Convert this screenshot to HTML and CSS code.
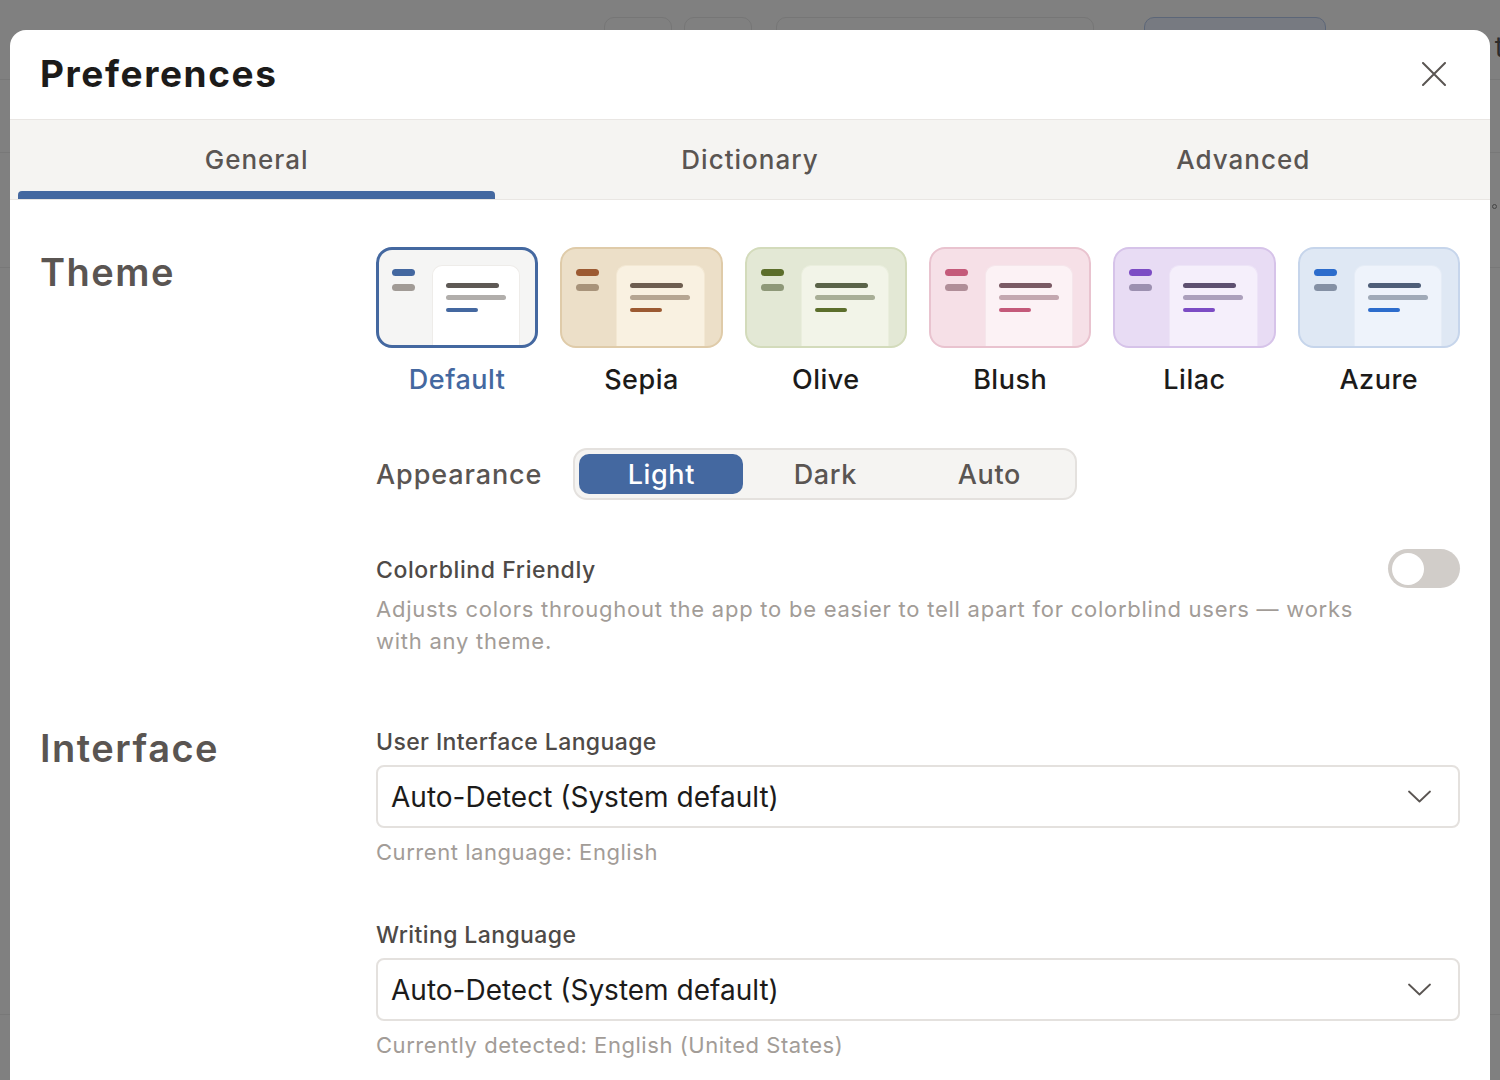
FILE: index.html
```html
<!DOCTYPE html>
<html lang="en">
<head>
    <meta charset="UTF-8">
    <meta name="viewport" content="width=device-width, initial-scale=1.0">
    <title>Preferences</title>
    <link rel="stylesheet" href="styles.css">
</head>
<body>
    <!-- app behind the dialog, dimmed -->
    <div class="backdrop">
        <div class="bg-top">
            <div class="bg-tools">
                <span class="bg-btn small"></span>
                <span class="bg-btn small"></span>
                <span class="bg-btn wide"></span>
                <span class="bg-btn primary"></span>
            </div>
            <span class="bg-text">t</span>
        </div>
        <div class="bg-row r1"></div>
        <div class="bg-row r2"><span class="bg-dot"></span></div>
        <div class="bg-row r3"></div>
    </div>

    <div class="modal">
        <header class="modal-head">
            <h1>Preferences</h1>
            <button class="close-btn" aria-label="Close">
                <svg width="24" height="24" viewBox="0 0 24 24" fill="none" stroke="#5a5552" stroke-width="2" stroke-linecap="round">
                    <path d="M1 1L23 23M23 1L1 23"/>
                </svg>
            </button>
        </header>

        <nav class="tabs">
            <div class="tab active">General</div>
            <div class="tab">Dictionary</div>
            <div class="tab">Advanced</div>
        </nav>

        <div class="modal-body">
            <section class="section">
                <h2 class="section-title">Theme</h2>
                <div class="section-content">
                    <div class="themes">
                        <div class="theme t-default selected">
                            <div class="theme-card">
                                <div class="pills"><span class="pill accent"></span><span class="pill muted"></span></div>
                                <div class="panel"><span class="ln ln1"></span><span class="ln ln2"></span><span class="ln ln3"></span></div>
                            </div>
                            <span class="theme-name">Default</span>
                        </div>
                        <div class="theme t-sepia">
                            <div class="theme-card">
                                <div class="pills"><span class="pill accent"></span><span class="pill muted"></span></div>
                                <div class="panel"><span class="ln ln1"></span><span class="ln ln2"></span><span class="ln ln3"></span></div>
                            </div>
                            <span class="theme-name">Sepia</span>
                        </div>
                        <div class="theme t-olive">
                            <div class="theme-card">
                                <div class="pills"><span class="pill accent"></span><span class="pill muted"></span></div>
                                <div class="panel"><span class="ln ln1"></span><span class="ln ln2"></span><span class="ln ln3"></span></div>
                            </div>
                            <span class="theme-name">Olive</span>
                        </div>
                        <div class="theme t-blush">
                            <div class="theme-card">
                                <div class="pills"><span class="pill accent"></span><span class="pill muted"></span></div>
                                <div class="panel"><span class="ln ln1"></span><span class="ln ln2"></span><span class="ln ln3"></span></div>
                            </div>
                            <span class="theme-name">Blush</span>
                        </div>
                        <div class="theme t-lilac">
                            <div class="theme-card">
                                <div class="pills"><span class="pill accent"></span><span class="pill muted"></span></div>
                                <div class="panel"><span class="ln ln1"></span><span class="ln ln2"></span><span class="ln ln3"></span></div>
                            </div>
                            <span class="theme-name">Lilac</span>
                        </div>
                        <div class="theme t-azure">
                            <div class="theme-card">
                                <div class="pills"><span class="pill accent"></span><span class="pill muted"></span></div>
                                <div class="panel"><span class="ln ln1"></span><span class="ln ln2"></span><span class="ln ln3"></span></div>
                            </div>
                            <span class="theme-name">Azure</span>
                        </div>
                    </div>

                    <div class="appearance-row">
                        <span class="appearance-label">Appearance</span>
                        <div class="segmented">
                            <span class="seg active">Light</span>
                            <span class="seg">Dark</span>
                            <span class="seg">Auto</span>
                        </div>
                    </div>

                    <div class="setting-row">
                        <div class="setting-text">
                            <div class="setting-title">Colorblind Friendly</div>
                            <p class="setting-desc">Adjusts colors throughout the app to be easier to tell apart for colorblind users — works with any theme.</p>
                        </div>
                        <span class="toggle"><span class="knob"></span></span>
                    </div>
                </div>
            </section>

            <section class="section interface">
                <h2 class="section-title">Interface</h2>
                <div class="section-content">
                    <div class="field">
                        <label class="field-label">User Interface Language</label>
                        <div class="select">
                            <span>Auto-Detect (System default)</span>
                            <svg width="23" height="13" viewBox="0 0 23 13" fill="none" stroke="#5a5552" stroke-width="1.8" stroke-linecap="round" stroke-linejoin="round">
                                <path d="M1 1.5L11.5 11.5L22 1.5"/>
                            </svg>
                        </div>
                        <div class="field-help">Current language: English</div>
                    </div>
                    <div class="field">
                        <label class="field-label">Writing Language</label>
                        <div class="select">
                            <span>Auto-Detect (System default)</span>
                            <svg width="23" height="13" viewBox="0 0 23 13" fill="none" stroke="#5a5552" stroke-width="1.8" stroke-linecap="round" stroke-linejoin="round">
                                <path d="M1 1.5L11.5 11.5L22 1.5"/>
                            </svg>
                        </div>
                        <div class="field-help">Currently detected: English (United States)</div>
                    </div>
                </div>
            </section>
        </div>
    </div>
</body>
</html>
```

FILE: styles.css
```css
* {
    box-sizing: border-box;
}
body {
    font-family: Inter, "Noto Sans", sans-serif;
    background-color: #808080;
    margin: 0;
    height: 1080px;
    overflow: hidden;
}

/* dimmed app in the back */
.backdrop {
    height: 1080px;
    display: flex;
    flex-direction: column;
    background-color: #808080;
}
.bg-top {
    height: 80px;
    display: flex;
    justify-content: space-between;
    border-bottom: 1px solid #787878;
}
.bg-tools {
    display: flex;
    gap: 12px;
    padding: 17px 0 0 604px;
}
.bg-btn {
    height: 40px;
    border: 1.5px solid #767676;
    border-radius: 10px;
}
.bg-btn.small {
    width: 68px;
}
.bg-btn.wide {
    width: 318px;
    margin-left: 12px;
}
.bg-btn.primary {
    width: 182px;
    margin-left: 38px;
    background-color: #777a81;
    border-color: #5c6678;
}
.bg-text {
    font-size: 28px;
    color: #2c2c2c;
    padding-top: 30px;
    margin-right: -4px;
}
.bg-row {
    border-bottom: 1px solid #787878;
}
.bg-row.r1 {
    height: 73px;
}
.bg-row.r2 {
    height: 115px;
    display: flex;
    justify-content: flex-end;
    align-items: center;
}
.bg-row.r3 {
    height: 747px;
}
.bg-dot {
    width: 5px;
    height: 5px;
    border: 1px solid #444;
    border-radius: 50%;
    margin: 0 3px 8px 0;
}

/* dialog */
.modal {
    position: absolute;
    top: 30px;
    left: 10px;
    width: 1480px;
    height: 1100px;
    background-color: #fff;
    border-radius: 16px;
    overflow: hidden;
}
.modal-head {
    height: 89px;
    display: flex;
    align-items: center;
    justify-content: space-between;
    padding: 0 44px 2px 30px;
}
.modal-head h1 {
    margin: 0;
    font-size: 37px;
    font-weight: 700;
    color: #1c1b1a;
    letter-spacing: 1.6px;
}
.close-btn {
    border: none;
    background: none;
    padding: 0;
    width: 24px;
    height: 24px;
    cursor: pointer;
}

.tabs {
    display: grid;
    grid-template-columns: repeat(3, 1fr);
    height: 81px;
    background-color: #f5f4f2;
    border-top: 1px solid #e9e6e3;
    border-bottom: 1px solid #e9e6e3;
}
.tab {
    position: relative;
    display: flex;
    align-items: center;
    justify-content: center;
    padding-bottom: 1px;
    font-size: 26px;
    font-weight: 500;
    color: #5a5552;
    letter-spacing: 1px;
}
.tab.active::after {
    content: "";
    position: absolute;
    left: 8px;
    right: 8px;
    bottom: 0;
    height: 8px;
    border-radius: 4px 4px 0 0;
    background-color: #4468a0;
}

.modal-body {
    padding: 47px 30px 0;
}
.section {
    display: grid;
    grid-template-columns: 336px 1fr;
    align-items: start;
}
.section-title {
    margin: 2px 0 0;
    font-size: 38px;
    line-height: 46px;
    font-weight: 600;
    color: #5a5552;
    letter-spacing: 1.5px;
}

/* theme swatches */
.themes {
    display: grid;
    grid-template-columns: repeat(6, 1fr);
    gap: 22px;
}
.theme {
    display: flex;
    flex-direction: column;
    align-items: center;
    gap: 15px;
}
.theme-card {
    width: 100%;
    height: 101px;
    display: flex;
    align-items: flex-start;
    padding: 0 16px 0 14px;
    border: 2px solid var(--edge);
    border-radius: 16px;
    background-color: var(--bg);
    overflow: hidden;
}
.selected .theme-card {
    border: 3px solid #4468a0;
    padding: 0 15px 0 13px;
}
.pills {
    display: flex;
    flex-direction: column;
    gap: 8px;
    margin-top: 20px;
    width: 23px;
    flex-shrink: 0;
}
.selected .pills {
    margin-top: 19px;
}
.pill {
    height: 7px;
    border-radius: 4px;
}
.pill.accent {
    background-color: var(--accent);
}
.pill.muted {
    background-color: var(--muted);
}
.panel {
    flex: 1;
    align-self: stretch;
    margin: 16px 0 0 17px;
    padding: 17px 0 0 13px;
    border-radius: 10px 10px 0 0;
    background-color: var(--panel);
    border: 1px solid var(--panel-edge);
    border-bottom: none;
    display: flex;
    flex-direction: column;
    gap: 7.5px;
}
.selected .panel {
    margin-top: 15px;
}
.ln {
    height: 4.5px;
    border-radius: 3px;
}
.ln1 {
    width: 53px;
    background-color: var(--ink);
}
.ln2 {
    width: 60px;
    background-color: var(--soft);
}
.ln3 {
    width: 32px;
    height: 4px;
    margin-top: 1px;
    background-color: var(--accent);
}
.theme-name {
    font-size: 27px;
    font-weight: 500;
    line-height: 34px;
    color: #1c1b1a;
    letter-spacing: 0.5px;
}
.selected .theme-name {
    color: #4468a0;
}

.t-default {
    --bg: #f5f5f4; --edge: #e4e2df; --panel: #ffffff; --panel-edge: #eeece9;
    --accent: #4468a0; --muted: #a19b96; --ink: #5e5955; --soft: #b1aeab;
}
.t-sepia {
    --bg: #ecdfc8; --edge: #dfcba9; --panel: #f9f1e1; --panel-edge: #f3e8d3;
    --accent: #9c5a32; --muted: #a8937a; --ink: #6e5e50; --soft: #b6a692;
}
.t-olive {
    --bg: #e3e8d5; --edge: #d3dbbb; --panel: #f2f4e8; --panel-edge: #eaeedd;
    --accent: #5c6e2b; --muted: #8e9878; --ink: #5a6348; --soft: #a8ae96;
}
.t-blush {
    --bg: #f6e0e7; --edge: #e9c3cf; --panel: #fcf2f5; --panel-edge: #f5e6eb;
    --accent: #c45a7a; --muted: #b08e98; --ink: #7a5a64; --soft: #c4a8b0;
}
.t-lilac {
    --bg: #e8dcf4; --edge: #d6c3e9; --panel: #f5effb; --panel-edge: #ede4f7;
    --accent: #7c4cc4; --muted: #9c90b0; --ink: #5e5070; --soft: #aca0bc;
}
.t-azure {
    --bg: #dfe8f4; --edge: #c6d5eb; --panel: #eef3fb; --panel-edge: #e5ecf6;
    --accent: #2c6ccc; --muted: #8490a4; --ink: #4e5e78; --soft: #a0aab8;
}

/* appearance */
.appearance-row {
    display: flex;
    align-items: center;
    gap: 31px;
    margin-top: 51px;
}
.appearance-label {
    font-size: 27px;
    font-weight: 500;
    color: #5a5552;
    letter-spacing: 0.9px;
}
.segmented {
    display: flex;
    padding: 4px;
    border: 2px solid #e4e1de;
    border-radius: 14px;
    background-color: #f5f4f2;
}
.seg {
    width: 164px;
    height: 40px;
    display: flex;
    align-items: center;
    justify-content: center;
    border-radius: 10px;
    font-size: 27px;
    font-weight: 500;
    color: #5a5552;
    letter-spacing: 0.6px;
}
.seg.active {
    background-color: #4468a0;
    color: #fff;
}

.setting-row {
    display: flex;
    align-items: flex-start;
    justify-content: space-between;
    gap: 24px;
    margin-top: 56px;
}
.setting-title {
    font-size: 23px;
    line-height: 28px;
    font-weight: 500;
    color: #4e4a47;
    letter-spacing: 0.6px;
}
.setting-desc {
    margin: 9px 0 0;
    font-size: 22px;
    line-height: 32px;
    color: #a29c97;
    letter-spacing: 0.75px;
}
.toggle {
    flex-shrink: 0;
    width: 72px;
    height: 39px;
    margin-top: -7px;
    padding: 3.5px;
    border-radius: 20px;
    background-color: #d1cdc9;
}
.knob {
    display: block;
    width: 32px;
    height: 32px;
    border-radius: 50%;
    background-color: #fff;
}

/* interface */
.interface {
    margin-top: 68px;
}
.interface .section-title {
    margin-top: 0;
}
.field {
    margin-bottom: 54px;
}
.field-label {
    display: block;
    margin-top: 3px;
    font-size: 23px;
    line-height: 28px;
    font-weight: 500;
    color: #4e4a47;
    letter-spacing: 0.4px;
}
.select {
    display: flex;
    align-items: center;
    justify-content: space-between;
    height: 63px;
    margin-top: 9px;
    padding: 0 27px 0 13px;
    border: 2px solid #e4e1de;
    border-radius: 8px;
    font-size: 28px;
    color: #1c1b1a;
    letter-spacing: 0;
}
.field-help {
    margin-top: 9px;
    font-size: 22px;
    line-height: 30px;
    color: #a29c97;
    letter-spacing: 0.55px;
}
```
